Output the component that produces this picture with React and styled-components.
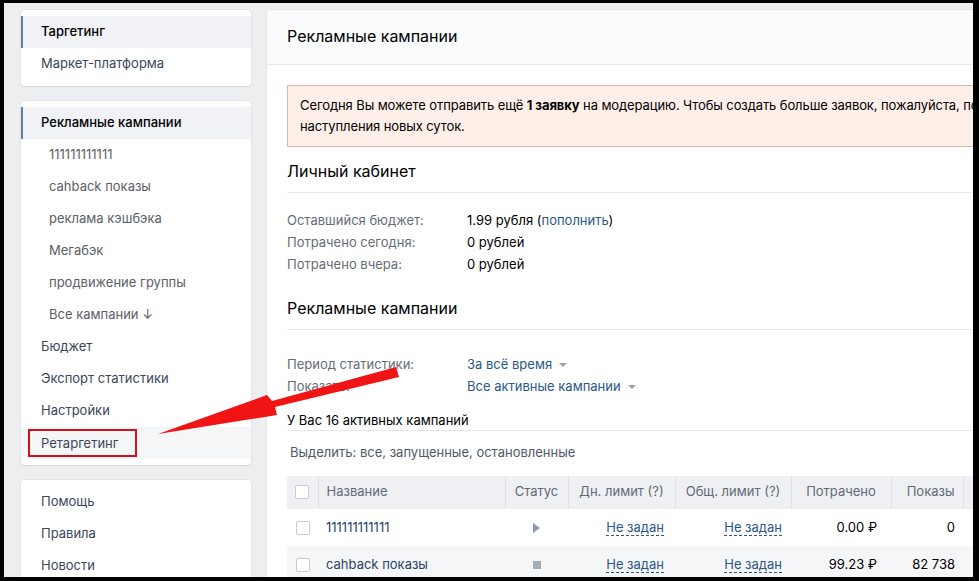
import React from "react";
import styled, { createGlobalStyle } from "styled-components";

const GlobalStyle = createGlobalStyle`
  body {
    margin: 0;
    font-family: Inter, "Liberation Sans", sans-serif;
    font-size: 13px;
    color: #000;
  }
`;

const Frame = styled.div`
  position: relative;
  width: 979px;
  height: 581px;
  box-sizing: border-box;
  background: #000;
  padding: 3px 6px 4px 4px;
`;

const Page = styled.div`
  height: 100%;
  box-sizing: border-box;
  background: #edeef0;
  overflow: hidden;
  display: flex;
  align-items: flex-start;
  gap: 16px;
  padding: 7px 0 0 17px;
`;

const Sidebar = styled.nav`
  flex: 0 0 230px;
  display: flex;
  flex-direction: column;
  gap: 15px;
`;

const MenuCard = styled.div`
  background: #fff;
  border-radius: 4px;
  box-shadow: 0 1px 0 0 #d7d8db, 0 0 0 1px #e3e4e8;
  padding: 6px 0;
`;

const MenuItem = styled.div`
  height: 32px;
  box-sizing: border-box;
  display: flex;
  align-items: center;
  padding: 0 0 2px ${(p) => (p.$sub ? 26 : 18)}px;
  border-left: 2px solid ${(p) => (p.$active ? "#5d7fa5" : "transparent")};
  background: ${(p) =>
    p.$active ? "#f0f2f5" : p.$hover ? "#f5f6f8" : "transparent"};
  color: ${(p) => (p.$active ? "#000" : p.$sub ? "#5b6066" : "#3a4758")};
  font-weight: ${(p) => (p.$active ? 500 : 400)};
`;

const Marked = styled.span`
  display: inline-block;
  line-height: 24px;
  padding: 0 17px 0 11px;
  margin: 2px 0 0 -13px;
  border: 2px solid #d0111b;
`;

const Main = styled.main`
  flex: 0 0 800px;
  min-height: 700px;
  background: #fff;
  border-radius: 4px;
  box-shadow: 0 1px 0 0 #d7d8db, 0 0 0 1px #e3e4e8;
`;

const MainHeader = styled.div`
  height: 55px;
  box-sizing: border-box;
  display: flex;
  align-items: center;
  padding: 0 20px 2px;
  background: #fafbfc;
  border-bottom: 1px solid #e7e8ec;
  border-radius: 4px 4px 0 0;
  font-size: 16px;
`;

const Content = styled.div`
  padding: 20px 20px 0;
`;

const Alert = styled.div`
  padding: 9px 12px;
  line-height: 21px;
  letter-spacing: -0.1px;
  white-space: nowrap;
  background: #ffefe9;
  border: 1px solid #ddb6a8;
`;

const SectionTitle = styled.div`
  font-size: 16px;
  line-height: 20px;
  padding: 14px 0 11px;
  border-bottom: 1px solid #e7e8ec;
`;

const InfoGrid = styled.div`
  display: grid;
  grid-template-columns: 180px auto;
  line-height: 22px;
  padding: ${(p) => p.$pad};
`;

const Label = styled.div`
  color: #656d76;
`;

const Value = styled.div`
  color: ${(p) => (p.$link ? "#2a5885" : "#000")};
`;

const Link = styled.span`
  color: #2a5885;
`;

const Caret = styled.span`
  display: inline-block;
  margin-left: 7px;
  vertical-align: middle;
  border-left: 4px solid transparent;
  border-right: 4px solid transparent;
  border-top: 4px solid #99a2ad;
`;

const Summary = styled.div`
  margin-top: 13px;
  line-height: 20px;
  border-bottom: 1px solid #e7e8ec;
`;

const SelectLine = styled.div`
  margin: 12px 0 15px;
  padding-left: 3px;
  line-height: 18px;
  color: #4f5a66;
`;

const Table = styled.table`
  width: 760px;
  table-layout: fixed;
  border-collapse: collapse;
`;

const Th = styled.th`
  height: 33px;
  box-sizing: border-box;
  padding: 0 8px 3px;
  line-height: 16px;
  background: #eef0f3;
  border-right: 1px solid #dde1e7;
  font-weight: 400;
  color: #626b75;
  text-align: ${(p) => p.$align || "center"};
  white-space: nowrap;
`;

const Tr = styled.tr`
  background: ${(p) => (p.$alt ? "#f5f6f8" : "#fff")};
`;

const Td = styled.td`
  height: 37px;
  box-sizing: border-box;
  padding: 0 ${(p) => p.$pr || 8}px 1px 8px;
  text-align: ${(p) => p.$align || "left"};
  white-space: nowrap;
  color: ${(p) => (p.$link ? "#2b4365" : "#000")};
`;

const Check = styled.span`
  display: inline-block;
  width: 14px;
  height: 14px;
  box-sizing: border-box;
  background: #fff;
  border: 1px solid #c5ccd3;
  border-radius: 2px;
  vertical-align: middle;
`;

const Dashed = styled.span`
  color: #2a5885;
  border-bottom: 1px dashed #2a5885;
`;

const StopIcon = styled.span`
  display: inline-block;
  width: 8px;
  height: 8px;
  background: #a3acb7;
  vertical-align: middle;
`;

const Arrow = styled.svg`
  position: absolute;
  left: 0;
  top: 0;
  pointer-events: none;
`;

const PlayIcon = () => (
  <svg width="7" height="10" viewBox="0 0 7 10" style={{ verticalAlign: "middle" }}>
    <path d="M0 0 L7 5 L0 10 Z" fill="#8a9ab0" />
  </svg>
);

const campaigns = [
  { name: "111111111111", status: "play", spent: "0.00 ₽", shows: "0" },
  { name: "cahback показы", status: "stop", spent: "99.23 ₽", shows: "82 738" },
];

const App = () => {
  return (
    <Frame>
      <GlobalStyle />
      <Page>
        <Sidebar>
          <MenuCard>
            <MenuItem $active>Таргетинг</MenuItem>
            <MenuItem>Маркет-платформа</MenuItem>
          </MenuCard>
          <MenuCard>
            <MenuItem $active>Рекламные кампании</MenuItem>
            <MenuItem $sub>111111111111</MenuItem>
            <MenuItem $sub>cahback показы</MenuItem>
            <MenuItem $sub>реклама кэшбэка</MenuItem>
            <MenuItem $sub>Мегабэк</MenuItem>
            <MenuItem $sub>продвижение группы</MenuItem>
            <MenuItem $sub>Все кампании ↓</MenuItem>
            <MenuItem>Бюджет</MenuItem>
            <MenuItem>Экспорт статистики</MenuItem>
            <MenuItem>Настройки</MenuItem>
            <MenuItem $hover>
              <Marked>Ретаргетинг</Marked>
            </MenuItem>
          </MenuCard>
          <MenuCard>
            <MenuItem>Помощь</MenuItem>
            <MenuItem>Правила</MenuItem>
            <MenuItem>Новости</MenuItem>
            <MenuItem>Блог</MenuItem>
          </MenuCard>
        </Sidebar>

        <Main>
          <MainHeader>Рекламные кампании</MainHeader>
          <Content>
            <Alert>
              Сегодня Вы можете отправить ещё <b>1 заявку</b> на модерацию. Чтобы
              создать больше заявок, пожалуйста, подождите до
              <br />
              наступления новых суток.
            </Alert>

            <SectionTitle>Личный кабинет</SectionTitle>
            <InfoGrid $pad="16px 0 9px">
              <Label>Оставшийся бюджет:</Label>
              <Value>
                1.99 рубля (<Link>пополнить</Link>)
              </Value>
              <Label>Потрачено сегодня:</Label>
              <Value>0 рублей</Value>
              <Label>Потрачено вчера:</Label>
              <Value>0 рублей</Value>
            </InfoGrid>

            <SectionTitle>Рекламные кампании</SectionTitle>
            <InfoGrid $pad="23px 0 0">
              <Label>Период статистики:</Label>
              <Value $link>
                За всё время
                <Caret />
              </Value>
              <Label>Показать:</Label>
              <Value $link>
                Все активные кампании
                <Caret />
              </Value>
            </InfoGrid>

            <Summary>У Вас 16 активных кампаний</Summary>
            <SelectLine>Выделить: все, запущенные, остановленные</SelectLine>

            <Table>
              <colgroup>
                <col style={{ width: 31 }} />
                <col style={{ width: 187 }} />
                <col style={{ width: 63 }} />
                <col style={{ width: 107 }} />
                <col style={{ width: 116 }} />
                <col style={{ width: 100 }} />
                <col style={{ width: 72 }} />
                <col />
              </colgroup>
              <thead>
                <tr>
                  <Th>
                    <Check />
                  </Th>
                  <Th $align="left">Название</Th>
                  <Th>Статус</Th>
                  <Th>Дн. лимит (?)</Th>
                  <Th>Общ. лимит (?)</Th>
                  <Th>Потрачено</Th>
                  <Th $align="right">Показы</Th>
                  <Th>Клики</Th>
                </tr>
              </thead>
              <tbody>
                {campaigns.map((c, i) => (
                  <Tr key={c.name} $alt={i % 2 === 1}>
                    <Td $align="center">
                      <Check />
                    </Td>
                    <Td $link>{c.name}</Td>
                    <Td $align="center">
                      {c.status === "play" ? <PlayIcon /> : <StopIcon />}
                    </Td>
                    <Td $align="right" $pr={11}>
                      <Dashed>Не задан</Dashed>
                    </Td>
                    <Td $align="right" $pr={9}>
                      <Dashed>Не задан</Dashed>
                    </Td>
                    <Td $align="right" $pr={14}>
                      {c.spent}
                    </Td>
                    <Td $align="right">{c.shows}</Td>
                    <Td $align="right">0</Td>
                  </Tr>
                ))}
              </tbody>
            </Table>
          </Content>
        </Main>
      </Page>

      <Arrow width="979" height="581" viewBox="0 0 979 581">
        <polygon
          points="158,434 277,415 275,407 399,377 396,367 272,401 267,395"
          fill="#f01414"
        />
      </Arrow>
    </Frame>
  );
};

export default App;
